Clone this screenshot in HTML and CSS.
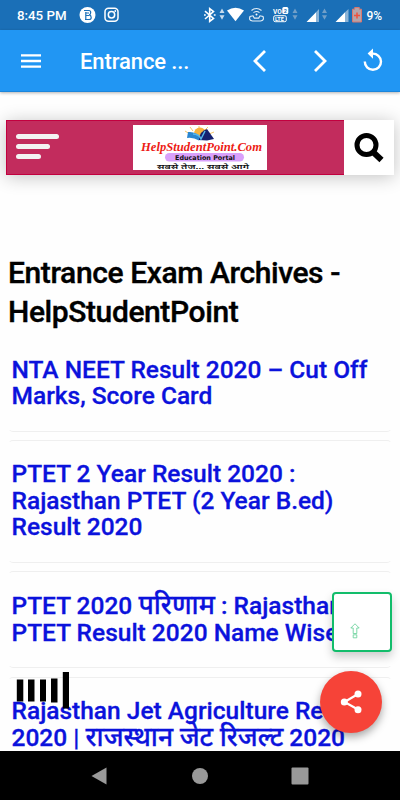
FILE: index.html
```html
<!DOCTYPE html>
<html lang="en">
	<head>
		<meta charset="utf-8">
		<title>Entrance Exam Archives - HelpStudentPoint</title>
		<link rel="stylesheet" href="styles.css">
	</head>
	<body>
		<div class="status">
			<span class="time">8:45 PM</span>
			<svg class="notify" width="44" height="18" viewBox="0 0 44 18">
				<circle cx="9.500" cy="9" r="8" fill="#fff"/>
				<path d="M6 4.500h5q1.700 0 1.700 2t-1.500 2.400q2 .4 2 2.500t-2.200 2.100H7M7.800 6v7.500M8 7h3M8 9.500h3" fill="none" stroke="#1a6fb7" stroke-width="1.200"/>
				<g fill="none" stroke="#fff" stroke-width="1.500">
					<rect x="27" y="2.300" width="13" height="13" rx="3.500"/>
					<circle cx="33.500" cy="8.800" r="3.200"/>
				</g>
				<circle cx="37.300" cy="5" r=".9" fill="#fff"/>
			</svg>
			<svg class="signals" width="162" height="20" viewBox="203 5 162 20">
				<path d="M205 11.200l8.500 7.200-3.800 3V8.600l3.800 3-8.500 7.400M204 15h1.800M213.800 15h1.800" fill="none" stroke="#fff" stroke-width="1.600"/>
				<path d="M219.500 13l2.500-4.500 2.500 4.500zM219.500 15.300h5L222 19.800z" fill="#c7dcee"/>
				<path d="M227 10.500q8.500-5.500 17 0L235.500 21.300z" fill="#fff"/>
				<g fill="none" stroke="#e6f0f8" stroke-width="1.100">
					<path d="M251.500 10.500q5-4 10 0M253.500 12.700q3-2.500 6 0M250 16.500q-1.500 4 2.500 4.500h8q4-.5 2.500-4.500l-3-.7-1.300 2.300h-4.400L253 15.800z"/>
				</g>
				<circle cx="256.500" cy="14.500" r="1" fill="#fff"/>
				<rect x="273.700" y="15.700" width="12.600" height="6" rx="1.500" fill="none" stroke="#fff"/>
				<rect x="282.300" y="7" width="6" height="7" rx="1.500" fill="#fff"/>
				<text x="273" y="14" class="tiny">VO</text>
				<text x="275" y="21" class="tiny lte">LTE</text>
				<text x="283.800" y="12.500" class="tiny dark">2</text>
				<path d="M292.500 13l2.500-4.500 2.500 4.500zM292.500 15.300h5L295 19.800zM322 13l2.500-4.500 2.500 4.500zM322 15.300h5l-2.500 4.500z" fill="#719fc8"/>
				<path d="M306.500 22l9.500-9.800V22zM335.500 22l9.500-9.800V22z" fill="#fff"/>
				<path d="M316 12.200l3-3.200V22h-3zM345 12.200l3.500-3.200V22H345z" fill="#8ab3d7"/>
				<path d="M354.700 7.500h4.600v1.700h2.200V22h-9V9.200h2.200z" fill="#b5a4a9" stroke="#d9776e"/>
				<path d="M357 12.500v6M354 15.500h6" stroke="#f0503d" stroke-width="1.500"/>
			</svg>
			<span class="percent">9%</span>
		</div>
		<div class="toolbar">
			<svg width="20" height="14" viewBox="0 0 20 14"><path d="M0 1.400h20M0 7h20M0 12.600h20" stroke="#fff" stroke-width="2.300"/></svg>
			<span class="page-name">Entrance ...</span>
			<svg class="prev" width="14" height="22" viewBox="0 0 14 22"><path d="M12 1L2 11l10 10"/></svg>
			<svg class="next" width="14" height="22" viewBox="0 0 14 22"><path d="M2 1l10 10L2 21"/></svg>
			<svg class="reload" width="20" height="24" viewBox="0 0 20 24">
				<path d="M9.500 5.600A8.100 8.100 0 1 1 1.800 13.500" fill="none" stroke="#fff" stroke-width="2.400"/>
				<path d="M10 .5v10.300L4.600 5.600z" fill="#fff"/>
			</svg>
		</div>
		<div class="content">
			<div class="site-header">
				<div class="menu"><i></i><i></i><i></i></div>
				<svg class="logo" width="134" height="45" viewBox="0 0 134 45">
					<rect width="134" height="45" fill="#fff"/>
					<path d="M57 9l-5-3M60 6l-3-4M66 4V1M72 5l3-3M76 9l5-2" stroke="#f5c76a"/>
					<circle cx="67" cy="8.500" r="6" fill="#f7b23d"/>
					<path d="M55 7q8-1 13 6l-2 2.500q-6-3.500-12-2.500z" fill="#2a86d0"/>
					<path d="M66 14q1-8 8-10l7 10-7 1.500-8-.5z" fill="#15206f"/>
					<path d="M60 9q6 0 8 5l4-8" fill="none" stroke="#54b6eb" stroke-width="1.500"/>
					<text x="8" y="26" textLength="121" lengthAdjust="spacingAndGlyphs" class="brand">HelpStudentPoint.Com</text>
					<rect x="32" y="28" width="79" height="8.500" rx="4.200" fill="#d9a0fb"/>
					<text x="42" y="34.700" textLength="60" lengthAdjust="spacingAndGlyphs" class="portal">Education Portal</text>
					<text x="24" y="63.500" transform="scale(1 .7)" textLength="92" lengthAdjust="spacingAndGlyphs" class="motto">सबसे तेज... सबसे आगे</text>
				</svg>
				<div class="search">
					<svg width="30" height="30" viewBox="0 0 30 30" fill="none" stroke="#000">
						<circle cx="12.500" cy="12" r="9.500" stroke-width="5"/>
						<path d="M19 19l8.500 8" stroke-width="6"/>
					</svg>
				</div>
			</div>
			<h1>Entrance Exam Archives -<br>HelpStudentPoint</h1>
			<div class="posts">
				<a class="post first">NTA NEET Result 2020 – Cut Off<br>Marks, Score Card</a>
				<a class="post">PTET 2 Year Result 2020 :<br>Rajasthan PTET (2 Year B.ed)<br>Result 2020</a>
				<a class="post">PTET 2020 <span class="hindi">परिणाम</span> : Rajasthan<br>PTET Result 2020 Name Wise</a>
				<a class="post">Rajasthan Jet Agriculture Result<br>2020 | <span class="hindi">राजस्थान जेट रिजल्ट</span> 2020</a>
			</div>
			<svg class="bars" width="54" height="38" viewBox="0 0 54 38"><path d="M.8 7.500h6.500v22H.8zM12 7.500h6.500v22H12zM24 7.500h6v22h-6zM35 6.500h6.500v24H35zM46.800 0h6.200v36.500h-6.200z"/></svg>
			<div class="to-top">
				<svg width="10" height="16" viewBox="0 0 10 16"><path d="M5 .8L.8 5h2.400v5.500h3.600V5h2.400zM3.200 11.800h3.600v3H3.200z" fill="none" stroke="#5fce94" stroke-width=".8"/></svg>
			</div>
			<div class="share">
				<svg width="22" height="24" viewBox="0 0 22 24" fill="#fff">
					<path d="M18 4L4.500 12 18 19.500" fill="none" stroke="#fff" stroke-width="2.200"/>
					<circle cx="18" cy="4" r="3.500"/><circle cx="4.300" cy="12" r="3.500"/><circle cx="18" cy="19.700" r="3.500"/>
				</svg>
			</div>
		</div>
		<div class="navbar">
			<svg width="16" height="18" viewBox="0 0 16 18"><path d="M15.500.5v17L.5 9z"/></svg>
			<svg width="16" height="16" viewBox="0 0 16 16"><circle cx="8" cy="8" r="8"/></svg>
			<svg width="18" height="18" viewBox="0 0 18 18"><rect x=".5" y=".5" width="17" height="17" rx="1"/></svg>
		</div>
	</body>
</html>
```
FILE: styles.css
```css
body {
	margin: 0;
	width: 400px;
	height: 800px;
	display: flex;
	flex-direction: column;
	overflow: hidden;
	font-family: Roboto, "Noto Sans", sans-serif;
	background: #fefefe;
}

svg {
	display: block;
	flex: none;
}

.status {
	height: 30px;
	display: flex;
	align-items: center;
	background: #1a6fb7;
	color: #fff;
	flex: none;
}

.time {
	width: 61px;
	padding-left: 17px;
	font-size: 13.3px;
	font-weight: 500;
	white-space: nowrap;
}

.signals {
	margin-left: 81px;
}

.percent {
	font-size: 12px;
	font-weight: 500;
	margin-left: 1.5px;
	padding-top: 1px;
}

.tiny {
	font-size: 6.5px;
	font-weight: 700;
	fill: #fff;
}

.lte {
	font-size: 5.5px;
}

.dark {
	font-size: 5.5px;
	fill: #1a6fb7;
}

.toolbar {
	height: 62px;
	flex: none;
	display: flex;
	align-items: center;
	box-sizing: border-box;
	padding-left: 21px;
	background: #2196f3;
	border-bottom: 1px solid #1b86dc;
	box-shadow: 0 1px 3px rgba(0, 0, 0, .3);
	color: #fff;
	z-index: 2;
}

.page-name {
	width: 173px;
	margin-left: 39px;
	font-size: 22px;
	font-weight: 500;
	letter-spacing: -.1px;
	padding-top: 2px;
}

.prev, .next {
	fill: none;
	stroke: #fff;
	stroke-width: 2.8;
}

.next {
	margin-left: 46px;
}

.reload {
	margin-left: 36px;
	margin-top: -2px;
}

.content {
	height: 659px;
	flex: none;
	position: relative;
	overflow: hidden;
}

.site-header {
	height: 55px;
	margin: 28px 6px 0;
	display: flex;
	background: #c22c5d;
	box-shadow: 0 2px 18px rgba(0, 0, 0, .24), inset 0 0 0 1px #c2003f;
}

.menu {
	width: 127px;
	box-sizing: border-box;
	padding: 14px 0 0 10px;
}

.menu i {
	display: block;
	width: 43px;
	height: 5px;
	margin-bottom: 5px;
	border-radius: 3px;
	background: #f3f3f3;
}

.menu i:nth-child(2) {
	width: 34px;
}

.menu i:nth-child(3) {
	width: 25px;
}

.logo {
	margin-top: 5px;
}

.brand {
	font-family: "Liberation Serif", serif;
	font-size: 13px;
	font-style: italic;
	font-weight: 700;
	fill: #ed1c16;
}

.portal {
	font-family: "DejaVu Sans", sans-serif;
	font-size: 6.5px;
	font-weight: 700;
	fill: #111;
}

.motto {
	font-family: "Noto Sans", "Noto Sans Devanagari", sans-serif;
	font-size: 9.5px;
	font-weight: 600;
	fill: #111;
}

.search {
	width: 50px;
	margin-left: auto;
	display: flex;
	align-items: center;
	justify-content: center;
	background: #fff;
}

h1 {
	margin: 78px 8px 0;
	font-size: 30px;
	line-height: 39px;
	font-weight: 500;
	letter-spacing: -.4px;
	-webkit-text-stroke: .4px;
	color: #000;
	white-space: nowrap;
}

.posts {
	display: flex;
	flex-direction: column;
	gap: 8.5px;
	padding: 5px 8px 0;
}

.post {
	display: block;
	padding: 19.7px 4px 21.3px 2.5px;
	font-size: 24.5px;
	line-height: 26.5px;
	font-weight: 500;
	-webkit-text-stroke: .3px;
	color: #0b12dc;
	white-space: nowrap;
	border: 1px solid transparent;
	border-top-color: #efefef;
	border-bottom-color: #efefef;
	border-radius: 5px;
}

.first {
	border-top-color: transparent;
}

.hindi {
	font-size: 26.4px;
	line-height: 1;
}

.bars {
	position: absolute;
	left: 16px;
	top: 580px;
}

.to-top {
	position: absolute;
	left: 332px;
	top: 500px;
	width: 60px;
	height: 60px;
	box-sizing: border-box;
	padding: 29px 0 0 16px;
	border: 2px solid #12bd6b;
	border-radius: 4px;
	background: #fff;
	box-shadow: 0 5px 10px rgba(0, 0, 0, .2);
}

.share {
	position: absolute;
	left: 320px;
	top: 579px;
	width: 62px;
	height: 62px;
	display: flex;
	align-items: center;
	justify-content: center;
	border-radius: 50%;
	background: #f64338;
	box-shadow: 0 4px 8px rgba(0, 0, 0, .35);
}

.navbar {
	flex: 1;
	display: flex;
	align-items: center;
	gap: 93px;
	padding-left: 91px;
	background: #000;
	fill: #999;
}

.navbar svg:nth-child(2) {
	margin-right: -10px;
	margin-left: -8px;
}
```
